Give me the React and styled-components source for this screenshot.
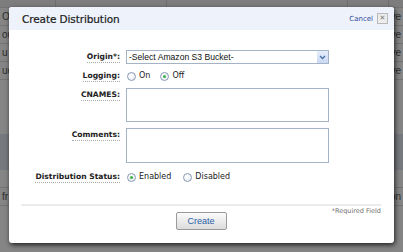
import React from "react";
import styled, { createGlobalStyle } from "styled-components";

const Global = createGlobalStyle`
  html, body { margin: 0; padding: 0; }
  body { width: 403px; height: 252px; overflow: hidden; background: #f4f4f4; font-family: "DejaVu Sans", Verdana, sans-serif; }
`;

const Page = styled.div`
  position: relative;
  width: 403px;
  height: 252px;
  overflow: hidden;
  background: #f6f6f6;
`;

const TableHead = styled.div`
  height: 7px;
  display: flex;
  background: #e4e4e4;
  border-bottom: 1px solid #cfcfcf;
`;

const HeadCell = styled.div`
  width: ${(p) => p.w}px;
  border-right: 1px solid #c4c4c4;
`;

const Row = styled.div`
  height: 17px;
  display: flex;
  justify-content: space-between;
  align-items: center;
  padding: 0 2px;
  border-bottom: 1px solid ${(p) => (p.line ? "#cfcfcf" : "transparent")};
  background: ${(p) => (p.band ? "#d6dbe6" : "transparent")};
  font-family: "Liberation Sans", Arial, sans-serif;
  font-size: 10px;
  color: #333;
`;

const Overlay = styled.div`
  position: absolute;
  inset: 0;
  background: rgba(40, 40, 40, 0.55);
`;

const Modal = styled.div`
  position: absolute;
  left: 9px;
  top: 7px;
  width: 385px;
  height: 236px;
  background: #fff;
  border-radius: 3px;
  box-shadow: 1px 2px 5px rgba(0, 0, 0, 0.75);
  display: flex;
  flex-direction: column;
  overflow: hidden;
`;

const Header = styled.div`
  height: 23px;
  flex: none;
  background: #edf2fb;
  display: flex;
  align-items: center;
  justify-content: space-between;
  padding: 0 6px 0 13px;
`;

const Title = styled.div`
  font-family: "DejaVu Sans", Verdana, sans-serif;
  font-size: 10.5px;
  color: #1a1a1a;
  letter-spacing: -0.1px;
  -webkit-text-stroke: 0.2px #1a1a1a;
`;

const CancelWrap = styled.div`
  display: flex;
  align-items: center;
  gap: 4px;
`;

const CancelLink = styled.span`
  font-family: "DejaVu Sans", Verdana, sans-serif;
  font-size: 7px;
  color: #2d4aa0;
`;

const CloseBox = styled.span`
  width: 9px;
  height: 9px;
  border: 1px solid #b9b9b9;
  background: #ececec;
  display: flex;
  align-items: center;
  justify-content: center;
  font-family: "DejaVu Sans", sans-serif;
  font-size: 7px;
  line-height: 1;
  color: #777;
`;

const Form = styled.div`
  display: grid;
  grid-template-columns: 111px 203px;
  column-gap: 6px;
  row-gap: 6px;
  padding: 20px 0 0 0;
  align-items: center;
`;

const Label = styled.div`
  justify-self: end;
  align-self: ${(p) => (p.top ? "start" : "center")};
  margin-top: ${(p) => (p.top ? 2 : p.mt || 0)}px;
  font-family: "DejaVu Sans", Verdana, sans-serif;
  font-weight: bold;
  font-size: 7.6px;
  color: #222;
  line-height: 10px;
  border-bottom: 1px dotted #aaa;
`;

const Select = styled.div`
  height: 12px;
  border: 1px solid #a5b3c8;
  display: flex;
  align-items: center;
  justify-content: space-between;
  padding-left: 2px;
  font-family: "Liberation Sans", Arial, sans-serif;
  font-size: 8.6px;
  color: #111;
  background: #fff;
`;

const Arrow = styled.span`
  width: 11px;
  height: 12px;
  background: linear-gradient(#e6eefb, #c9d8f2);
  display: flex;
  align-items: center;
  justify-content: center;
`;

const TextArea = styled.div`
  height: ${(p) => p.h}px;
  border: 1px solid #a5b3c8;
  background: #fff;
`;

const RadioGroup = styled.div`
  display: flex;
  align-items: center;
  height: 12px;
  padding-left: 1px;
  margin-top: ${(p) => p.mt || 0}px;
`;

const RadioItem = styled.label`
  display: flex;
  align-items: center;
  gap: 3px;
  margin-right: ${(p) => p.mr}px;
  font-family: "DejaVu Sans", Verdana, sans-serif;
  font-size: 8px;
  line-height: 10px;
  color: #222;
`;

const RadioCircle = styled.span`
  width: 7px;
  height: 7px;
  border-radius: 50%;
  border: 1px solid #8a9bb5;
  background: radial-gradient(circle at 40% 40%, #fff, #e3e8ef);
  display: flex;
  align-items: center;
  justify-content: center;
  &::after {
    content: "";
    width: 3px;
    height: 3px;
    border-radius: 50%;
    background: ${(p) => (p.on ? "#3cb043" : "transparent")};
  }
`;

const Footer = styled.div`
  margin: 21px 13px 0 12px;
  border-top: 2px solid #ececec;
  display: flex;
  flex-direction: column;
  align-items: center;
`;

const Required = styled.div`
  align-self: flex-end;
  font-family: "DejaVu Sans", Verdana, sans-serif;
  font-size: 6.5px;
  color: #707070;
  margin-top: 1px;
  height: 5px;
  line-height: 8px;
`;

const Button = styled.button`
  width: 51px;
  height: 18px;
  border: 1px solid #9a9a9a;
  border-radius: 2px;
  background: linear-gradient(#fbfbfb, #dcdcdc);
  font-family: "Liberation Sans", Arial, sans-serif;
  font-size: 9px;
  color: #2a5ea8;
  padding: 0;
`;

const rows = [
  { l: "Of", r: "ve", line: true },
  { l: "ou", r: "ve", line: true },
  { l: "u", r: "ve", line: true },
  { l: "uc", r: "ve", line: true },
  { l: "", r: "" },
  { l: "", r: "" },
  { l: "", r: "" },
  { l: "", r: "", band: true },
  { l: "", r: "", band: true },
  { l: "", r: "", line: true },
  { l: "fr", r: "on", line: true },
  { l: "", r: "" },
  { l: "", r: "" },
  { l: "", r: "" },
];

function Radio({ on, label, mr = 0 }) {
  return (
    <RadioItem mr={mr}>
      <RadioCircle on={on} />
      {label}
    </RadioItem>
  );
}

export default function App() {
  return (
    <Page>
      <Global />
      <TableHead>
        <HeadCell w={55} />
        <HeadCell w={110} />
        <HeadCell w={180} />
        <HeadCell w={40} />
      </TableHead>
      {rows.map((r, i) => (
        <Row key={i} line={r.line} band={r.band}>
          <span>{r.l}</span>
          <span>{r.r}</span>
        </Row>
      ))}
      <Overlay />
      <Modal>
        <Header>
          <Title>Create Distribution</Title>
          <CancelWrap>
            <CancelLink>Cancel</CancelLink>
            <CloseBox>✕</CloseBox>
          </CancelWrap>
        </Header>
        <Form>
          <Label>Origin*:</Label>
          <Select>
            <span>-Select Amazon S3 Bucket-</span>
            <Arrow>
              <svg width="7" height="5" viewBox="0 0 7 5">
                <path d="M1 1 L3.5 3.5 L6 1" fill="none" stroke="#4a6ea8" strokeWidth="1.3" />
              </svg>
            </Arrow>
          </Select>
          <Label>Logging:</Label>
          <RadioGroup>
            <Radio label="On" mr={10} />
            <Radio on label="Off" />
          </RadioGroup>
          <Label top>CNAMES:</Label>
          <TextArea h={32} />
          <Label top>Comments:</Label>
          <TextArea h={33} />
          <Label mt={2}>Distribution Status:</Label>
          <RadioGroup mt={2}>
            <Radio on label="Enabled" mr={12} />
            <Radio label="Disabled" />
          </RadioGroup>
        </Form>
        <Footer>
          <Required>*Required Field</Required>
          <Button>Create</Button>
        </Footer>
      </Modal>
    </Page>
  );
}
